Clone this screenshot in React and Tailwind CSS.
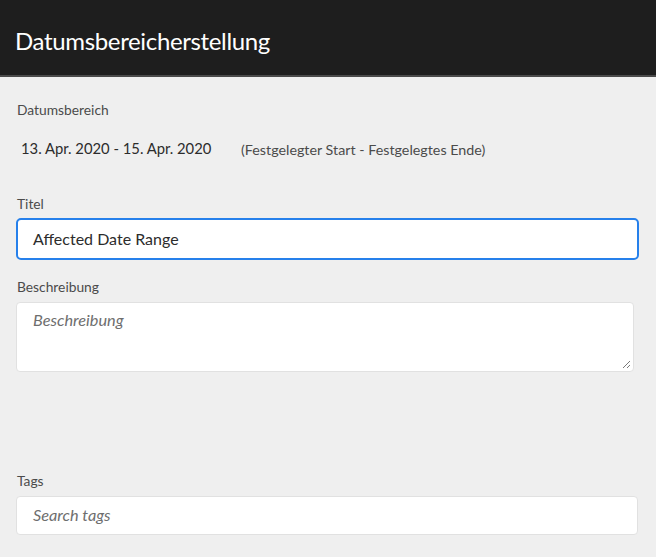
import React from "react";

export default function App() {
  return (
    <div className="w-[656px] h-[557px] bg-[#efefef] overflow-hidden font-['Lato',sans-serif]">
      <div className="h-[77px] bg-[#1e1e1e] border-b-2 border-[#4a4a4a] flex items-center pl-[15px] pt-[6px]">
        <h1 className="text-[24px] text-white font-normal tracking-[-0.35px]">Datumsbereicherstellung</h1>
      </div>
      <div className="px-[16px] pt-[24px]">
        <div className="text-[13.8px] text-[#4b4b4b] leading-[18px] pl-[1px]">Datumsbereich</div>
        <div className="flex items-center mt-[19px] h-[20px]">
          <span className="text-[14.8px] text-[#2c2c2c] pl-[5px] w-[225px]">13. Apr. 2020 - 15. Apr. 2020</span>
          <span className="text-[14.3px] text-[#4b4b4b] mt-[3px]">(Festgelegter Start - Festgelegtes Ende)</span>
        </div>
        <div className="text-[13.8px] text-[#4b4b4b] leading-[18px] pl-[1px] mt-[37px]">Titel</div>
        <div className="mt-[5px] h-[42px] w-[623px] bg-white border-2 border-[#2680eb] rounded-[5px] flex items-center pl-[15px]">
          <span className="text-[16px] text-[#2c2c2c]">Affected Date Range</span>
        </div>
        <div className="text-[13.8px] text-[#4b4b4b] leading-[18px] pl-[1px] mt-[18px]">Beschreibung</div>
        <div className="relative mt-[6px] h-[70px] w-[618px] bg-white border border-[#e1e1e1] rounded-[4px] pl-[16px] pt-[5px]">
          <span className="text-[16.3px] italic text-[#6e6e6e]">Beschreibung</span>
          <svg className="absolute right-[2px] bottom-[2px]" width="10" height="10" viewBox="0 0 10 10">
            <line x1="9" y1="2" x2="2" y2="9" stroke="#7a7a7a" strokeWidth="1" />
            <line x1="9" y1="6" x2="6" y2="9" stroke="#7a7a7a" strokeWidth="1" />
          </svg>
        </div>
        <div className="text-[13.8px] text-[#4b4b4b] leading-[18px] pl-[1px] mt-[100px]">Tags</div>
        <div className="mt-[6px] h-[39px] w-[622px] bg-white border border-[#e1e1e1] rounded-[4px] flex items-center pl-[16px]">
          <span className="text-[16.3px] italic text-[#6e6e6e]">Search tags</span>
        </div>
      </div>
    </div>
  );
}
